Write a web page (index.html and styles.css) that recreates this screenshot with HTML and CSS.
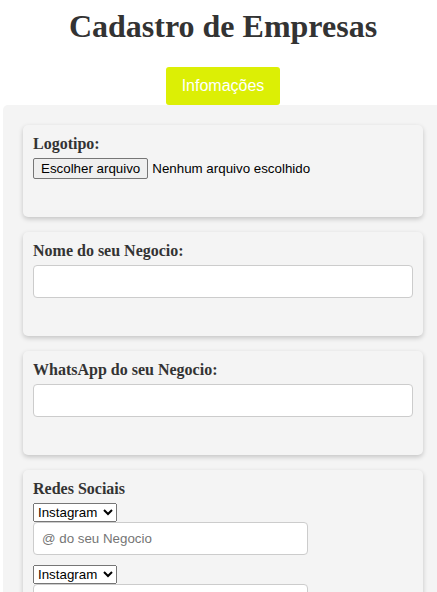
FILE: index.html
```html
<!DOCTYPE html>
<html lang="pt-BR">
<head>
<meta charset="utf-8">
<title>Cadastro de Empresas</title>
<link rel="stylesheet" href="styles.css">
</head>
<body>
<div class="page">
  <h1 class="title">Cadastro de Empresas</h1>
  <div class="tabs">
    <button class="tab" type="button">Infomações</button>
  </div>
  <form class="panel">
    <div class="card">
      <label class="card-label">Logotipo:</label>
      <div class="file-row">
        <label class="file-btn">Escolher arquivo<input class="file-hidden" type="file"></label>
        <span class="file-name">Nenhum arquivo escolhido</span>
      </div>
    </div>
    <div class="card">
      <label class="card-label" for="nome">Nome do seu Negocio:</label>
      <input class="text-input" id="nome" type="text">
    </div>
    <div class="card">
      <label class="card-label" for="whats">WhatsApp do seu Negocio:</label>
      <input class="text-input" id="whats" type="text">
    </div>
    <div class="card">
      <label class="card-label">Redes Sociais</label>
      <div class="social">
        <select class="social-select">
          <option>Instagram</option>
          <option>Facebook</option>
          <option>TikTok</option>
        </select>
        <input class="text-input social-input" type="text" placeholder="@ do seu Negocio">
      </div>
      <div class="social">
        <select class="social-select">
          <option>Instagram</option>
          <option>Facebook</option>
          <option>TikTok</option>
        </select>
        <input class="text-input social-input" type="text" placeholder="@ do seu Negocio">
      </div>
    </div>
  </form>
</div>
</body>
</html>
```

FILE: styles.css
```css
html {
  overflow-x: hidden;
}

body {
  margin: 8px 0 8px 3px;
  background: #ffffff;
}

.page {
  width: 440px;
}

.title {
  margin: 0 0 22px;
  font-family: "Liberation Serif", "Times New Roman", serif;
  font-size: 32px;
  line-height: 37px;
  font-weight: bold;
  color: #333333;
  text-align: center;
}

.tabs {
  display: flex;
  justify-content: center;
}

.tab {
  padding: 9px 16px;
  border: none;
  border-radius: 3px;
  background: #dcef05;
  color: #ffffff;
  font-family: "Liberation Sans", Arial, sans-serif;
  font-size: 16px;
  line-height: 20px;
  cursor: pointer;
}

.panel {
  background: #f4f4f4;
  border-radius: 5px;
  padding: 20px;
  min-height: 600px;
}

.card {
  background: #f4f4f4;
  border-radius: 5px;
  box-shadow: 0 2px 5px rgba(0, 0, 0, 0.2);
  padding: 10px 10px 38px;
  margin-bottom: 15px;
}

.card-label {
  display: block;
  margin-bottom: 5px;
  font-family: "Liberation Serif", "Times New Roman", serif;
  font-size: 16px;
  line-height: 18px;
  font-weight: bold;
  color: #333333;
}

.file-row {
  display: flex;
  align-items: center;
  font-family: "Liberation Sans", Arial, sans-serif;
  font-size: 13.333px;
}

.file-btn {
  display: inline-block;
  padding: 2px 7px;
  margin-right: 4px;
  line-height: 15px;
  border: 1px solid #767676;
  border-radius: 2px;
  background: #efefef;
  color: #000000;
}

.file-hidden {
  display: none;
}

.file-name {
  color: #000000;
  line-height: 15px;
}

.text-input {
  display: block;
  width: 100%;
  height: 33px;
  box-sizing: border-box;
  padding: 8px;
  border: 1px solid #cccccc;
  border-radius: 4px;
  background: #ffffff;
  font-family: "Liberation Sans", Arial, sans-serif;
  font-size: 13.333px;
}

.text-input::placeholder {
  color: #757575;
}

.social + .social {
  margin-top: 10px;
}

.social-select {
  display: block;
  width: 84px;
  font-family: "Liberation Sans", Arial, sans-serif;
  font-size: 13.333px;
}

.social-input {
  width: 275px;
}
```
